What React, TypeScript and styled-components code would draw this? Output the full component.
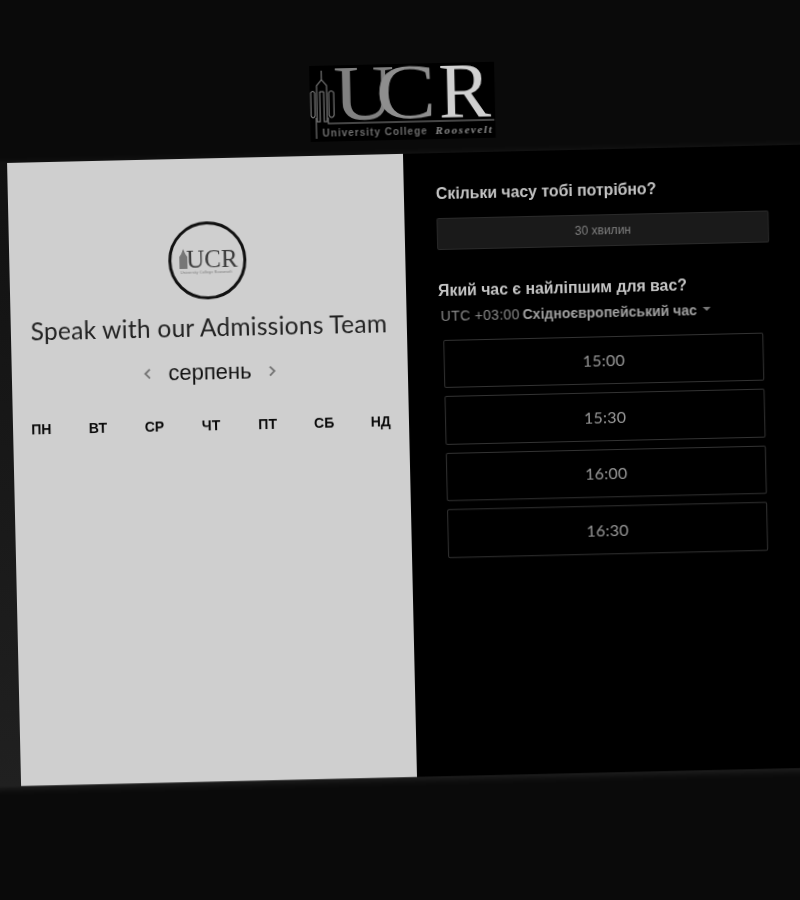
import React from 'react'
import styled, { createGlobalStyle } from 'styled-components'

const GlobalStyle = createGlobalStyle`
  html, body {
    margin: 0;
    padding: 0;
    width: 800px;
    height: 900px;
    overflow: hidden;
    background: #0a0a0a;
  }
`

const Page = styled.div`
  width: 800px;
  height: 900px;
  overflow: hidden;
  background: #0a0a0a;
  font-family: 'Liberation Sans', Arial, sans-serif;
`

// the whole page is photographed slightly tilted
const Tilted = styled.div`
  width: 840px;
  height: 900px;
  transform-origin: 0 0;
  transform: matrix(1, -0.023, 0.0225, 1, 3.4, 0);
  filter: blur(0.45px);
  display: flex;
  flex-direction: column;
`

const Header = styled.header`
  height: 163px;
  padding-top: 57px;
  padding-left: 301px;
  box-sizing: border-box;
`

const Card = styled.main`
  display: flex;
  height: 623px;
  margin-left: -40px;
  padding-left: 40px;
  background: linear-gradient(#111, #202020);
  box-shadow: 0 2px 7px rgba(255, 255, 255, 0.12);
`

const LeftPanel = styled.section`
  width: 396px;
  background: #cfcfcf;
  color: #1c1c1c;
  display: flex;
  flex-direction: column;
  align-items: center;
  padding-top: 63px;
  box-sizing: border-box;
`

const Badge = styled.div`
  width: 78px;
  height: 78px;
  box-sizing: border-box;
  border: 3px solid #111;
  border-radius: 50%;
  display: flex;
  align-items: center;
  justify-content: center;
`

const Title = styled.h1`
  margin: 13px 0 0;
  font-family: Lato, 'Open Sans', sans-serif;
  font-weight: 400;
  font-size: 24.5px;
  line-height: 30px;
  color: #222;
  letter-spacing: 0.25px;
`

const MonthRow = styled.div`
  display: flex;
  align-items: center;
  justify-content: center;
  gap: 15px;
  margin-top: 15px;
  font-size: 22px;
  line-height: 30px;
  color: #111;
`

const Chevron = styled.svg`
  width: 10px;
  height: 12px;
  fill: none;
  stroke: #777;
  stroke-width: 2;
`

const WeekRow = styled.div`
  display: grid;
  grid-template-columns: repeat(7, 1fr);
  width: 396px;
  margin-top: 28px;
  justify-items: center;
`

const WeekDay = styled.span`
  font-weight: 700;
  font-size: 14px;
  line-height: 20px;
  color: #0a0a0a;
`

const RightPanel = styled.section`
  flex: 1;
  background: #000;
  padding: 31px 32px 0 32px;
  display: flex;
  flex-direction: column;
  box-sizing: border-box;
`

const Question = styled.h2`
  margin: 0;
  font-size: 15.8px;
  line-height: 20px;
  font-weight: 700;
  color: #c4c4c4;
`

const Duration = styled.div`
  margin-top: 14px;
  width: 332px;
  height: 32px;
  box-sizing: border-box;
  background: #1a1a1a;
  border: 1px solid #2a2a2a;
  border-radius: 2px;
  font-size: 12px;
  line-height: 30px;
  text-align: center;
  color: #808080;
`

const SecondQuestion = styled(Question)`
  margin-top: 31px;
`

const Zone = styled.div`
  display: flex;
  align-items: center;
  gap: 3px;
  margin-top: 5px;
  margin-left: 2px;
  font-size: 14px;
  line-height: 20px;
  color: #8a8a8a;
`

const ZoneOffset = styled.span`
  letter-spacing: 0.3px;
`

const ZoneName = styled.strong`
  color: #a0a0a0;
  font-weight: 700;
`

const Caret = styled.span`
  width: 0;
  height: 0;
  margin-left: 3px;
  margin-top: -2px;
  border-left: 4px solid transparent;
  border-right: 4px solid transparent;
  border-top: 4px solid #777;
`

const Slots = styled.div`
  display: flex;
  flex-direction: column;
  gap: 8px;
  margin-top: 13.5px;
  margin-left: 4px;
  width: 320px;
`

const Slot = styled.button`
  height: 48.5px;
  padding: 0;
  background: #000;
  border: 1px solid #333;
  border-radius: 2px;
  font-family: Lato, sans-serif;
  font-size: 16px;
  letter-spacing: 0.2px;
  color: #999;
`

const LogoSvg = styled.svg`
  display: block;
`

const Tower = () => (
  <g fill="none" stroke="#8a8a8a" strokeWidth="1">
    <path d="M15 5V14L10 20V56H13V26M15 14L20 20V56H17V26M13 26H17" />
    <path d="M8 27Q6 24 4 27V50Q6 54 8 50V27" />
    <path d="M22 27Q24.500 24 27 27V50Q24.500 54 22 50V27" />
    <path d="M9 73V52M21 52V58H187" />
  </g>
)

const Logo = () => (
  <LogoSvg width="190" height="92" viewBox="0 -16 190 92">
    <rect x="3" width="185" height="76" fill="#000" />
    <Tower />
    <g fontFamily="'Liberation Serif'" fontSize="78">
      <text transform="translate(27 54) scale(1.08 1)" fill="#808080">U</text>
      <text transform="translate(69 54) scale(1.16 1)" fill="#8e8e8e">C</text>
      <text x="132" y="54" fill="#d0d0d0">R</text>
    </g>
    <text x="15" y="71" fontFamily="'Liberation Sans'" fontSize="10" fontWeight="700" letterSpacing="1" fill="#6c6c6c">University College</text>
    <text x="128" y="71" fontFamily="'Liberation Serif'" fontSize="11" fontStyle="italic" fontWeight="700" letterSpacing="1.6" fill="#8c8c8c">Roosevelt</text>
  </LogoSvg>
)

const SmallLogo = () => (
  <svg width="62" height="32" viewBox="0 0 62 32">
    <path d="M3 24V12l2-3 2-5 2 5 2 3v12z" fill="#777" />
    <text x="10" y="23" fontFamily="'Liberation Serif'" fontSize="25" fill="#3a3a3a">UCR</text>
    <text x="4" y="29" fontFamily="'Liberation Sans'" fontSize="3.6" letterSpacing="0.2" fill="#777">University College Roosevelt</text>
  </svg>
)

const days = ['ПН', 'ВТ', 'СР', 'ЧТ', 'ПТ', 'СБ', 'НД']
const times = ['15:00', '15:30', '16:00', '16:30']

export default function App() {
  return (
    <Page>
      <GlobalStyle />
      <Tilted>
        <Header>
          <Logo />
        </Header>
        <Card>
          <LeftPanel>
            <Badge>
              <SmallLogo />
            </Badge>
            <Title>Speak with our Admissions Team</Title>
            <MonthRow>
              <Chevron viewBox="0 0 10 12"><path d="M7 1.500 2.500 6 7 10.500" /></Chevron>
              <span>серпень</span>
              <Chevron viewBox="0 0 10 12"><path d="M3 1.500 7.500 6 3 10.500" /></Chevron>
            </MonthRow>
            <WeekRow>
              {days.map(d => <WeekDay key={d}>{d}</WeekDay>)}
            </WeekRow>
          </LeftPanel>
          <RightPanel>
            <Question>Скільки часу тобі потрібно?</Question>
            <Duration>30 хвилин</Duration>
            <SecondQuestion>Який час є найліпшим для вас?</SecondQuestion>
            <Zone>
              <ZoneOffset>UTC +03:00</ZoneOffset>
              <ZoneName>Східноєвропейський час</ZoneName>
              <Caret />
            </Zone>
            <Slots>
              {times.map(t => <Slot key={t}>{t}</Slot>)}
            </Slots>
          </RightPanel>
        </Card>
      </Tilted>
    </Page>
  )
}
